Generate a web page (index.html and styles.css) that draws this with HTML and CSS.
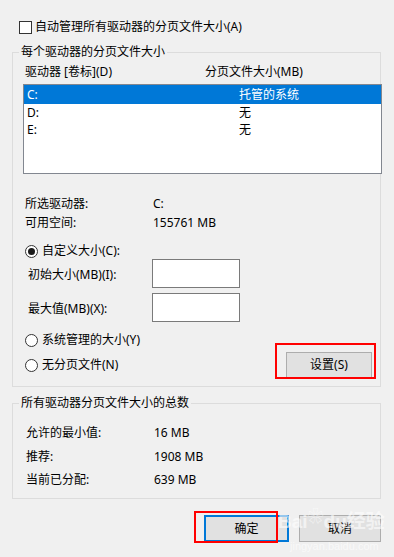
FILE: index.html
```html
<!DOCTYPE html>
<html lang="zh-CN">
<head>
<meta charset="utf-8">
<title>虚拟内存</title>
<link rel="stylesheet" href="styles.css">
</head>
<body>
<div class="dialog">
  <div class="auto">
    <span class="checkbox"></span>
    <span>自动管理所有驱动器的分页文件大小(A)</span>
  </div>

  <fieldset class="group group-drives">
    <legend>每个驱动器的分页文件大小</legend>
    <div class="list-head">
      <span class="col-drive">驱动器 [卷标](D)</span>
      <span>分页文件大小(MB)</span>
    </div>
    <div class="listbox">
      <div class="row selected"><span class="col-a">C:</span><span>托管的系统</span></div>
      <div class="row"><span class="col-a">D:</span><span>无</span></div>
      <div class="row"><span class="col-a">E:</span><span>无</span></div>
    </div>

    <div class="info">
      <div class="kv"><span class="k">所选驱动器:</span><span>C:</span></div>
      <div class="kv"><span class="k">可用空间:</span><span>155761 MB</span></div>
    </div>

    <div class="radio-line r-custom"><span class="radio checked"></span><span>自定义大小(C):</span></div>
    <div class="field f-first"><span class="flabel">初始大小(MB)(I):</span><span class="input"></span></div>
    <div class="field f-second"><span class="flabel">最大值(MB)(X):</span><span class="input"></span></div>
    <div class="radio-line r-system"><span class="radio"></span><span>系统管理的大小(Y)</span></div>
    <div class="last-line">
      <div class="radio-line"><span class="radio"></span><span>无分页文件(N)</span></div>
      <div class="btn-wrap set-wrap">
        <span class="btn">设置(S)</span>
        <span class="mark mark-set"></span>
      </div>
    </div>
  </fieldset>

  <fieldset class="group group-total">
    <legend>所有驱动器分页文件大小的总数</legend>
    <div class="kv t1"><span class="k">允许的最小值:</span><span>16 MB</span></div>
    <div class="kv t2"><span class="k">推荐:</span><span>1908 MB</span></div>
    <div class="kv t3"><span class="k">当前已分配:</span><span>639 MB</span></div>
  </fieldset>

  <div class="buttons">
    <div class="btn-wrap">
      <span class="btn btn-ok">确定</span>
      <span class="mark mark-ok"></span>
    </div>
    <span class="btn">取消</span>
    <div class="watermark">
      <span class="wm-big">Bai<span class="paw">❀</span>du经验</span>
      <span class="wm-small">jingyan.baidu.com</span>
    </div>
  </div>
</div>
</body>
</html>
```
FILE: styles.css
```css
html, body {
  margin: 0;
  padding: 0;
  background: #f0f0f0;
}
body {
  font-family: "Noto Sans", "Noto Sans CJK SC", sans-serif;
  font-size: 12px;
  line-height: 16px;
  color: #000;
  width: 394px;
  height: 557px;
  overflow: hidden;
}
.dialog {
  padding-left: 12px;
  width: 369px;
}
.auto {
  margin-top: 19px;
  margin-left: 7px;
  height: 16px;
  display: flex;
  align-items: center;
  gap: 3px;
}
.checkbox {
  width: 11px;
  height: 11px;
  border: 1px solid #333;
  background: #fff;
  flex: none;
}
.group {
  margin: 0;
  padding: 0;
  border: 1px solid #dcdcdc;
  min-width: 0;
}
.group legend {
  margin-left: 6px;
  padding: 0 2px;
  line-height: 16px;
}
.group-drives {
  margin-top: 9px;
  padding-bottom: 8px;
}
.list-head {
  margin-top: 4px;
  padding-left: 12px;
  display: flex;
  height: 16px;
}
.col-drive {
  width: 180px;
}
.listbox {
  margin-top: 4px;
  margin-left: 10px;
  margin-right: -2px;
  height: 88px;
  border: 1px solid #828790;
  background: #fff;
}
.row {
  display: flex;
  padding-left: 3px;
  height: 17px;
  line-height: 17px;
}
.row.selected {
  background: #0078d7;
  color: #fff;
  height: 19px;
  line-height: 19px;
}
.col-a {
  width: 212px;
}
.info {
  margin-top: 22px;
  display: flex;
  flex-direction: column;
  gap: 3px;
}
.kv {
  display: flex;
  padding-left: 12px;
  height: 16px;
}
.kv .k {
  width: 128px;
}
.radio-line {
  display: flex;
  align-items: center;
  gap: 4px;
  padding-left: 12px;
  height: 16px;
}
.radio {
  width: 11px;
  height: 11px;
  border: 1px solid #333;
  border-radius: 50%;
  background: #fff;
  flex: none;
  display: flex;
  align-items: center;
  justify-content: center;
}
.radio.checked::after {
  content: "";
  width: 7px;
  height: 7px;
  border-radius: 50%;
  background: #1a1a1a;
}
.r-custom {
  margin-top: 12px;
}
.field {
  display: flex;
  align-items: center;
  padding-left: 15px;
  height: 29px;
}
.f-second {
  margin-top: 5px;
}
.flabel {
  width: 124px;
  padding-top: 3px;
}
.input {
  width: 86px;
  height: 27px;
  border: 1px solid #7a7a7a;
  background: #fff;
}
.r-system {
  margin-top: 10px;
}
.last-line {
  margin-top: 4px;
  display: flex;
  justify-content: space-between;
  align-items: center;
  height: 26px;
  padding-right: 8px;
}
.btn-wrap {
  position: relative;
  display: flex;
}
.btn {
  box-sizing: border-box;
  display: flex;
  align-items: center;
  justify-content: center;
  width: 86px;
  height: 26px;
  background: #e1e1e1;
  border: 1px solid #adadad;
}
.mark {
  position: absolute;
  border: 2px solid #ff0000;
  pointer-events: none;
}
.mark-set {
  left: -11px;
  top: -9px;
  right: -4px;
  bottom: -1px;
}
.group-total {
  margin-top: 8px;
  padding-bottom: 10px;
}
.t1 { margin-top: 14px; }
.t2 { margin-top: 8px; }
.t3 { margin-top: 7px; }
.group-total .kv {
  padding-left: 13px;
}
.buttons {
  position: relative;
  margin-top: 16px;
  padding-left: 192px;
  display: flex;
  gap: 10px;
}
.buttons .btn {
  height: 27px;
}
.btn-ok {
  width: 85px !important;
  border: 2px solid #0078d7;
}
.mark-ok {
  left: -10px;
  top: -4px;
  right: 11px;
  bottom: -1px;
}
.watermark {
  position: absolute;
  left: 266px;
  top: -10px;
  display: flex;
  flex-direction: column;
  align-items: flex-start;
  color: rgba(255, 255, 255, 0.6);
  pointer-events: none;
}
.wm-big {
  font-family: "Liberation Sans", "Noto Sans CJK SC", sans-serif;
  font-size: 19px;
  line-height: 24px;
  font-weight: bold;
  white-space: nowrap;
}
.paw {
  font-size: 16px;
  vertical-align: 6px;
}
.wm-small {
  margin-left: 12px;
  margin-top: 6px;
  font-family: "Liberation Sans", sans-serif;
  font-size: 11px;
  line-height: 12px;
}
```
